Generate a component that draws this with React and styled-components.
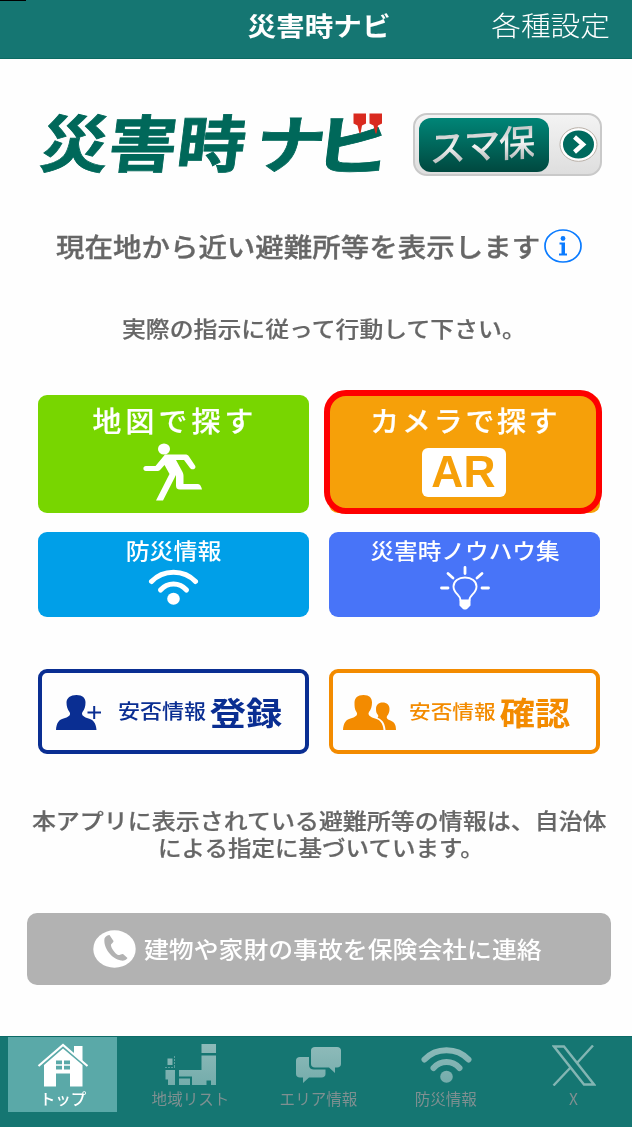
import React from 'react';
import styled, { createGlobalStyle } from 'styled-components';

const GlobalStyle = createGlobalStyle`
  * {
    box-sizing: border-box;
  }

  body {
    margin: 0;
    background: #fefefe;
    font-family: 'Noto Sans CJK JP', 'Liberation Sans', sans-serif;
  }

  button {
    margin: 0;
    padding: 0;
    border: 0;
    background: none;
    font-family: inherit;
  }
`;

const Screen = styled.div`
  display: flex;
  flex-direction: column;
  width: 632px;
  height: 1127px;
  overflow: hidden;
  background: #fefefe;
`;

// wide lettering used across the whole app
const Text = styled.span`
  display: block;
  flex: none;
  white-space: nowrap;
  text-align: center;
  color: ${({ $color }) => $color || '#fff'};
  font-size: ${({ $size }) => $size}px;
  font-weight: ${({ $weight }) => $weight || 500};
  line-height: ${({ $line }) => $line || 30}px;
  letter-spacing: ${({ $spacing }) => $spacing || 0}px;
  -webkit-text-stroke: ${({ $stroke }) => $stroke || 0}px currentColor;
  transform: scaleX(${({ $stretch }) => $stretch || 1.1});
  transform-origin: ${({ $origin }) => $origin || 'center'};
`;

const Header = styled.header`
  display: grid;
  grid-template-columns: 1fr 144px 1fr;
  height: 59px;
  padding: 9px 22px 0 22px;
  background: #157672;
  border-bottom: 1px solid #0c6a62;
`;

const StatusMark = styled.div`
  position: absolute;
  top: 0;
  left: 0;
  width: 26px;
  height: 1px;
  background: #000;
`;

const HeaderTitle = styled.h1`
  grid-column: 2;
  display: flex;
  justify-content: center;
  margin: 0;
  padding-left: 7px;
`;

const HeaderAction = styled.button`
  display: flex;
  justify-content: flex-end;
  align-items: flex-start;
`;

const Main = styled.main`
  display: flex;
  flex: 1;
  flex-direction: column;
  align-items: center;
`;

const Brand = styled.div`
  display: flex;
  width: 100%;
  height: 63px;
  margin-top: 54px;
  padding-left: 36px;
`;

const LogoSvg = styled.svg`
  display: block;
  width: 354px;
  height: 63px;
  margin-right: 23px;
  overflow: visible;
`;

const Badge = styled.button`
  display: flex;
  align-items: center;
  justify-content: space-between;
  width: 189px;
  height: 63px;
  padding: 0 2px 0 6px;
  border: 2px solid #c9c9c9;
  border-radius: 14px;
  background: linear-gradient(#f3f3f3, #dedede);
`;

const BadgeName = styled.span`
  display: flex;
  align-items: center;
  justify-content: center;
  width: 130px;
  height: 54px;
  margin-left: -2px;
  border-radius: 12px;
  background: linear-gradient(#008577, #006a5e 45%, #00483f);
`;

const BadgeText = styled.span`
  margin-top: -3px;
  margin-right: 5px;
  color: transparent;
  background: linear-gradient(#a9adad, #f4f4f4 55%, #a5aaaa);
  background-clip: text;
  font-size: 37px;
  font-weight: 500;
  line-height: 46px;
  letter-spacing: -1.5px;
  white-space: nowrap;
  transform: rotate(-4deg) skewX(-4deg);
`;

const Lead = styled.p`
  display: flex;
  align-items: center;
  gap: 25px;
  height: 36px;
  margin: 52px 0 0 28px;
`;

const Caption = styled.p`
  display: flex;
  justify-content: center;
  height: 30px;
  margin: 49px 0 0 15px;
`;

const Grid = styled.div`
  display: grid;
  grid-template-columns: 271px 271px;
  grid-template-rows: 118px 104px 137px;
  column-gap: 20px;
  margin: 52px 0 0 6px;
`;

const Tile = styled.button`
  display: flex;
  flex-direction: column;
  align-items: center;
  position: relative;
  margin-top: ${({ $top }) => $top || 0}px;
  padding-top: ${({ $pad }) => $pad}px;
  padding-left: ${({ $shift }) => $shift || 0}px;
  border-radius: 9px;
  background: ${({ $bg }) => $bg};

  svg {
    display: block;
    flex: none;
    margin-top: ${({ $iconTop }) => $iconTop || 0}px;
    margin-right: ${({ $iconRight }) => $iconRight || 0}px;
  }
`;

const Highlight = styled.div`
  position: absolute;
  top: -5px;
  left: -5px;
  width: 278px;
  height: 124px;
  border: 6px solid #fe0000;
  border-radius: 22px;
`;

const ArBox = styled.span`
  display: flex;
  align-items: center;
  justify-content: center;
  width: 84px;
  height: 49px;
  margin-top: 13px;
  margin-right: 4px;
  border-radius: 6px;
  background: #fff;
  font-family: 'Liberation Sans', Arial, sans-serif;
`;

const Outline = styled.button`
  display: flex;
  align-items: center;
  height: 85px;
  margin-top: 52px;
  padding-left: ${({ $pad }) => $pad}px;
  border: 4px solid ${({ $color }) => $color};
  border-radius: 9px;
  color: ${({ $color }) => $color};

  svg {
    flex: none;
    margin-top: 2px;
  }
`;

const Words = styled.span`
  display: flex;
  align-items: center;
  gap: ${({ $gap }) => $gap}px;
  margin-top: -2px;
  margin-left: ${({ $left }) => $left}px;
`;

const Note = styled.p`
  display: flex;
  justify-content: center;
  margin: 0 0 0 6px;
  padding-top: 52px;
`;

const NoteEnd = styled.span`
  padding-left: 3px;
  font-size: 21.4px;
`;

const Call = styled.button`
  display: flex;
  align-items: center;
  width: 584px;
  height: 72px;
  margin: 53px 0 0 6px;
  padding-left: 66px;
  border-radius: 10px;
  background: #b2b2b2;
`;

const CallText = styled.span`
  display: flex;
  margin-left: 8px;
`;

const Nav = styled.nav`
  display: grid;
  grid-template-columns: repeat(5, 109px);
  column-gap: 18.7px;
  height: 91px;
  padding-left: 8px;
  background: #157672;
  border-top: 1px solid #0c6a66;
`;

const Tab = styled.button`
  display: flex;
  flex-direction: column;
  align-items: center;
  height: 75px;
  padding-top: 6px;
  padding-left: 1px;
  background: ${({ $active }) => ($active ? '#5aa9a8' : 'transparent')};

  svg {
    display: block;
    flex: none;
  }
`;

const TabIcon = styled.span`
  display: flex;
  align-items: center;
  height: 44px;
  margin-bottom: 2px;
`;

const GREY = '#666';
const NAVY = '#0a2e92';
const AMBER = '#f38b00';

const Logo = () => (
  <LogoSvg viewBox="36 113 354 63">
    <g fill="#00685a" stroke="#00685a" strokeWidth="0.8" fontWeight="700" fontSize="62">
      <text transform="translate(38 167) skewX(-7)" textLength="205" lengthAdjust="spacingAndGlyphs">
        災害時
      </text>
      <text transform="translate(253 168) skewX(-7) scale(1.13 1.02)">ナ</text>
      <text transform="translate(312 169) skewX(-7) scale(1.3 1.06)">ビ</text>
    </g>
    <path d="M351 104h46v23h-46z" fill="#fefefe" />
    <path
      d="M353.500 113.500h12.500v10l-4 2-1.500 8h-1l-2-8-4-2zM369.500 113.500H382v10l-4 2-1.500 8h-1l-2-8-4-2z"
      fill="#d92a1f"
    />
  </LogoSvg>
);

const ArrowIcon = () => (
  <svg width="39" height="35" viewBox="0 0 39 35">
    <ellipse cx="19.500" cy="17.500" rx="18.500" ry="16.800" fill="#fff" stroke="#b9b0a8" />
    <ellipse cx="19.500" cy="17.500" rx="15.500" ry="14" fill="#006a5e" />
    <path d="M15.500 10l8.500 7.500-8.500 7.500" fill="none" stroke="#fff" strokeWidth="4.500" />
  </svg>
);

const InfoIcon = () => (
  <svg width="38" height="34" viewBox="0 0 38 34">
    <ellipse cx="19" cy="17" rx="18" ry="16" fill="none" stroke="#0a7bff" strokeWidth="1.700" />
    <circle cx="19" cy="9.500" r="2.400" fill="#0a7bff" />
    <path d="M15.500 13.500h5.500v11h2v2h-8v-2h2.500v-9h-2z" fill="#0a7bff" />
  </svg>
);

const RunIcon = () => (
  <svg width="60" height="58" viewBox="0 0 60 58">
    <ellipse cx="21" cy="6" rx="6" ry="5.500" fill="#fff" />
    <path
      d="M22 11.500h20c2 0 3 .5 4 2l6 9c2 3-3 5.500-5 2.500l-6-8h-8l6 11c1 2 1.500 3 1.500 5v8H55c2 0 3.500 3 4 5.500H37c-3 0-4-1.500-4-4V32l-13 25.500h-7L26.500 31l-5-9-4 4.500c-1 1-2 1.500-4 1.500H3c-3.500 0-3.500-5 0-5h9.500z"
      fill="#fff"
    />
  </svg>
);

const WifiIcon = ({ fill = '#fff' }) => (
  <svg width="51" height="36" viewBox="0 0 51 36">
    {fill !== '#fff' && (
      <defs>
        <linearGradient id="wifi" x1="0" y1="0" x2="0" y2="36" gradientUnits="userSpaceOnUse">
          <stop offset="0" stopColor="#8dbab9" />
          <stop offset="1" stopColor="#74acab" />
        </linearGradient>
      </defs>
    )}
    <g fill="none" stroke={fill} strokeWidth={fill === '#fff' ? 5 : 6} strokeLinecap="round">
      <path d="M3.500 12.500C15 0 36 0 47.500 12.500" />
      <path d="M12.500 21c7-8 19-8 26 0" />
    </g>
    <ellipse cx="25.500" cy="29.700" rx="6.300" ry="6" fill={fill} />
  </svg>
);

const BulbIcon = () => (
  <svg width="50" height="44" viewBox="0 0 50 44">
    <g fill="none" stroke="#fff" strokeLinecap="round">
      <path d="M25 1.500v6M8 7.500l5 4.500M42 7.500l-5 4.500M1.500 22H8M42 22h6.500" strokeWidth="2.800" />
      <path
        d="M20.500 34c0-5-7-6.500-7-13.500C13.500 15 18.500 11.500 25 11.500S36.500 15 36.500 20.500c0 7-7 8.500-7 13.500"
        strokeWidth="1.900"
      />
    </g>
    <path d="M19.500 33.500h11v6l-2.500 2.500c-1.500 2-4.500 2-6 0l-2.500-2.500z" fill="#fff" />
  </svg>
);

const AddPersonIcon = () => (
  <svg width="46" height="36" viewBox="0 0 46 36" fill="currentColor">
    <path d="M20.500 0c6 0 9 3 9 7.500 0 4-1 7-3 9.500-1.500 2.500.5 4.500 4.500 6 6.500 1.500 9 5 9.500 12H0c.5-7 2.500-10.500 9-12 4.500-1.500 6-3.500 4.500-6-2-2.500-3-5.500-3-9.500 0-4.500 4-7.500 10-7.500z" />
    <path d="M37.200 11h2v5.500H45v2h-5.800V24h-2v-5.500h-5.700v-2h5.700z" />
  </svg>
);

const PeopleIcon = () => (
  <svg width="54" height="36" viewBox="0 0 54 36" fill="currentColor">
    <path d="M20.500 0c6 0 8.500 3 8.500 7.500 0 4-1 7-3 9.500-1.500 2.500.5 4.500 4.500 6 6.500 1.500 9.500 5 10 12H0c.5-7 2.500-10.500 9-12 4.500-1.500 6-3.500 4.500-6-2-2.500-2-5.500-2-9.500 0-4.500 3-7.500 9-7.500z" />
    <path d="M39.500 7.500c4.500 0 7 2.500 7 6.500 0 3-1 5.500-2.500 7-1 2 .5 3.500 3.500 4.500 4 1.500 5.500 4.500 5.500 9.500H42.500c-.5-6-2.500-10-7.500-12-1-.5 1-1 0-3-1.500-1.500-2-3-2-6C33 10 35.500 7.500 39.500 7.500z" />
  </svg>
);

const PhoneIcon = () => (
  <svg width="43" height="38" viewBox="0 0 43 38">
    <ellipse cx="21.500" cy="19" rx="21.200" ry="18.800" fill="#fff" />
    <path
      d="M11.500 8.500c1-2 3-3.500 5-3.500l4 6c.5 1-2 2.500-2.500 3.500-.5 3 4 9 7 10.500 1.500.5 4-1.500 5-1l4.500 4c-1 2-4 3-6.500 2.500C19 29 10 18 11.500 8.500z"
      fill="#b2b2b2"
    />
  </svg>
);

const HomeIcon = () => (
  <svg width="52" height="44" viewBox="0 0 52 44">
    <path d="M1.500 23L26 2l24.500 21" fill="none" stroke="#fff" strokeWidth="2.200" />
    <path d="M37 3h8.500v15L37 11z" fill="#fff" />
    <path d="M26 5.500L45.500 22v21.500H33V30.500H19v13H7V22z" fill="#fff" />
    <path d="M19 17.500h6v3.700h-6zM27 17.500h6v3.700h-6zM19 22.700h6v3.700h-6zM27 22.700h6v3.700h-6z" fill="#5aa9a8" />
  </svg>
);

const MapIcon = () => (
  <svg width="52" height="42" viewBox="0 0 52 42">
    <defs>
      <linearGradient id="map" x1="0" y1="0" x2="0" y2="42" gradientUnits="userSpaceOnUse">
        <stop offset="0" stopColor="#8dbab9" />
        <stop offset="1" stopColor="#74acab" />
      </linearGradient>
    </defs>
    <path
      d="M36.500 0H51v9H36.500zM36.500 11.500H51V41h-5v-4.500h-4.500V41H27v-8.500H14V26h22.500zM14 34.500h11V41H14zM.5 26H10v15H3v-5.500H.5zM2.500 14.500h5v6.500h-5z"
      fill="url(#map)"
    />
    <path d="M0 23.500h10M9.500 12v11" stroke="#5b9f9d" strokeDasharray="2 1" />
  </svg>
);

const ChatIcon = () => (
  <svg width="45" height="37" viewBox="0 0 45 37">
    <defs>
      <linearGradient id="chat" x1="0" y1="0" x2="0" y2="37" gradientUnits="userSpaceOnUse">
        <stop offset="0" stopColor="#8dbab9" />
        <stop offset="1" stopColor="#74acab" />
      </linearGradient>
    </defs>
    <g fill="url(#chat)">
      <path d="M19 0h22c2.500 0 4 1.500 4 3.500v13.500c0 2-1.500 3.500-4 3.500h-2V26l-6-5.500H19c-2.500 0-4-1.500-4-3.500V3.500C15 1.500 16.500 0 19 0z" />
      <path d="M4 10h9v8c0 3 2 4.500 5 4.500h11.500V27c0 2-1.500 3.500-4 3.500H13L7 36v-5.500H4c-2.500 0-4-1.500-4-3.500V13.500C0 11.500 1.500 10 4 10z" />
    </g>
  </svg>
);

const XIcon = () => (
  <svg width="44" height="41" viewBox="0 0 44 41" fill="none" stroke="#83b5b3" strokeWidth="2.400">
    <path d="M2 1.500h10L42 39.500H32zM41 .5L25 18M1.500 40.500L19 22" />
  </svg>
);

const tabs = [
  { label: 'トップ', icon: <HomeIcon />, active: true },
  { label: '地域リスト', icon: <MapIcon /> },
  { label: 'エリア情報', icon: <ChatIcon /> },
  { label: '防災情報', icon: <WifiIcon fill="url(#wifi)" /> },
  { label: 'X', icon: <XIcon /> },
];

const App = () => (
  <>
    <GlobalStyle />
    <Screen>
      <Header>
        <StatusMark />
        <HeaderTitle>
          <Text $size={26} $weight={700} $line={32}>
            災害時ナビ
          </Text>
        </HeaderTitle>
        <HeaderAction>
          <Text $size={27} $weight={300} $line={32} $origin="right">
            各種設定
          </Text>
        </HeaderAction>
      </Header>

      <Main>
        <Brand>
          <Logo />
          <Badge>
            <BadgeName>
              <BadgeText>スマ保</BadgeText>
            </BadgeName>
            <ArrowIcon />
          </Badge>
        </Brand>

        <Lead>
          <Text $size={25.9} $stroke={0.3} $color={GREY}>
            現在地から近い避難所等を表示します
          </Text>
          <InfoIcon />
        </Lead>
        <Caption>
          <Text $size={21.5} $stretch={1.11} $stroke={0.2} $color={GREY}>
            実際の指示に従って行動して下さい。
          </Text>
        </Caption>

        <Grid>
          <Tile $bg="#78d600" $pad={10} $shift={4} $iconTop={8} $iconRight={6}>
            <Text $size={28} $stretch={1.03} $spacing={4} $stroke={0.2}>
              地図で探す
            </Text>
            <RunIcon />
          </Tile>
          <Tile $bg="#f6a009" $pad={10} $shift={2}>
            <Text $size={28} $stretch={1.03} $spacing={2.8} $stroke={0.2}>
              カメラで探す
            </Text>
            <ArBox>
              <Text $size={43.5} $stretch={1.02} $weight={700} $color="#f6a009" $line={49}>
                AR
              </Text>
            </ArBox>
            <Highlight />
          </Tile>
          <Tile $bg="#009fe8" $top={19} $pad={3} $iconTop={4}>
            <Text $size={21.8}>防災情報</Text>
            <WifiIcon />
          </Tile>
          <Tile $bg="#4874f8" $top={19} $pad={3} $shift={2} $iconTop={1} $iconRight={2}>
            <Text $size={21.5}>災害時ノウハウ集</Text>
            <BulbIcon />
          </Tile>
          <Outline $color={NAVY} $pad={14}>
            <AddPersonIcon />
            <Words $left={20} $gap={12}>
              <Text $size={20} $color={NAVY}>
                安否情報
              </Text>
              <Text $size={32} $weight={700} $stretch={1.13} $color={NAVY}>
                登録
              </Text>
            </Words>
          </Outline>
          <Outline $color={AMBER} $pad={10}>
            <PeopleIcon />
            <Words $left={16} $gap={11}>
              <Text $size={19.7} $color={AMBER}>
                安否情報
              </Text>
              <Text $size={32} $weight={700} $color={AMBER}>
                確認
              </Text>
            </Words>
          </Outline>
        </Grid>

        <Note>
          <Text $size={21.8} $line={27} $stroke={0.2} $color={GREY}>
            本アプリに表示されている避難所等の情報は、自治体
            <br />
            <NoteEnd>による指定に基づいています。</NoteEnd>
          </Text>
        </Note>

        <Call>
          <PhoneIcon />
          <CallText>
            <Text $size={22.6} $origin="left">
              建物や家財の事故を保険会社に連絡
            </Text>
          </CallText>
        </Call>
      </Main>

      <Nav>
        {tabs.map(({ label, icon, active }) => (
          <Tab key={label} $active={active}>
            <TabIcon>{icon}</TabIcon>
            <Text
              $size={15.4}
              $stretch={1.01}
              $line={19}
              $weight={active ? 500 : 400}
              $color={active ? '#fff' : '#7f9091'}>
              {label}
            </Text>
          </Tab>
        ))}
      </Nav>
    </Screen>
  </>
);

export default App;
